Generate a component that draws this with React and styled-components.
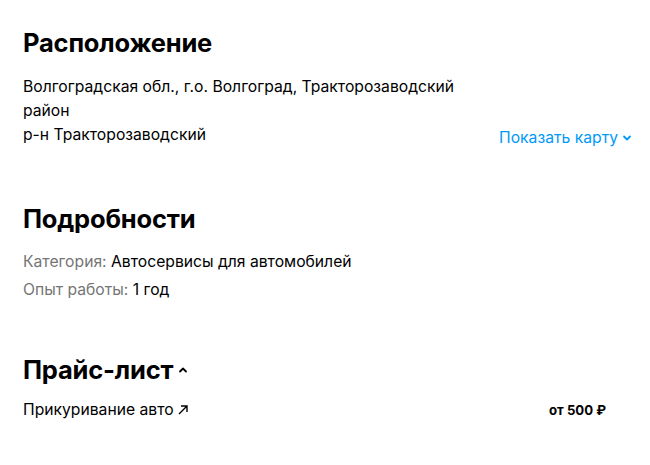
import React from "react";
import styled, { createGlobalStyle } from "styled-components";

const GlobalStyle = createGlobalStyle`
  * {
    margin: 0;
    padding: 0;
    box-sizing: border-box;
  }
  body {
    background: #ffffff;
    font-family: Inter, "Noto Sans", sans-serif;
    color: #000000;
  }
`;

const Page = styled.div`
  width: 650px;
  padding: 27px 18px 0 23px;
  display: flex;
  flex-direction: column;
`;

const Section = styled.section`
  margin-bottom: ${(p) => p.$gap || 0}px;
`;

const Heading = styled.h2`
  display: flex;
  align-items: center;
  gap: 5px;
  font-size: 25.5px;
  line-height: 32px;
  font-weight: 700;
  letter-spacing: -0.2px;
`;

const Body = styled.div`
  margin-top: ${(p) => p.$top || 10}px;
  font-size: 15.7px;
  line-height: ${(p) => p.$lh || 24}px;
`;

const LocationRow = styled.div`
  display: flex;
  justify-content: space-between;
  align-items: flex-end;
`;

const Address = styled.div`
  max-width: 445px;
`;

const MapLink = styled.a`
  display: flex;
  align-items: center;
  gap: 4px;
  color: #0099f7;
  font-size: 15.7px;
  line-height: 24px;
  cursor: pointer;
  margin-bottom: -3px;
`;

const Label = styled.span`
  color: #757575;
`;

const PriceRow = styled.div`
  margin-top: 14px;
  width: 583px;
  display: flex;
  justify-content: space-between;
  align-items: center;
  font-size: 15.7px;
  line-height: 20px;
`;

const ServiceName = styled.span`
  display: flex;
  align-items: center;
  gap: 3px;
`;

const Price = styled.span`
  font-size: 13.2px;
  font-weight: 700;
`;

const Chevron = ({ up, color = "currentColor", size = 10 }) => (
  <svg width={size} height={size} viewBox="0 0 10 10" fill="none">
    <path
      d={up ? "M2 6.5 L5 3.5 L8 6.5" : "M2 3.5 L5 6.5 L8 3.5"}
      stroke={color}
      strokeWidth="1.8"
      strokeLinecap="round"
      strokeLinejoin="round"
    />
  </svg>
);

const ArrowOut = () => (
  <svg width="12" height="12" viewBox="0 0 12 12" fill="none">
    <path d="M2 10 L10 2 M4 2 H10 V8" stroke="#000" strokeWidth="1.4" />
  </svg>
);

export default function App() {
  return (
    <>
      <GlobalStyle />
      <Page>
        <Section $gap={56}>
          <Heading>Расположение</Heading>
          <Body $top={16}>
            <LocationRow>
              <Address>
                Волгоградская обл., г.о. Волгоград, Тракторозаводский район
                <br />
                р-н Тракторозаводский
              </Address>
              <MapLink>
                Показать карту <Chevron />
              </MapLink>
            </LocationRow>
          </Body>
        </Section>
        <Section $gap={50}>
          <Heading>Подробности</Heading>
          <Body $top={13} $lh={28}>
            <div>
              <Label>Категория:</Label> Автосервисы для автомобилей
            </div>
            <div>
              <Label>Опыт работы:</Label> 1 год
            </div>
          </Body>
        </Section>
        <Section>
          <Heading>
            Прайс-лист <Chevron up />
          </Heading>
          <PriceRow>
            <ServiceName>
              Прикуривание авто <ArrowOut />
            </ServiceName>
            <Price>от 500 ₽</Price>
          </PriceRow>
        </Section>
      </Page>
    </>
  );
}
